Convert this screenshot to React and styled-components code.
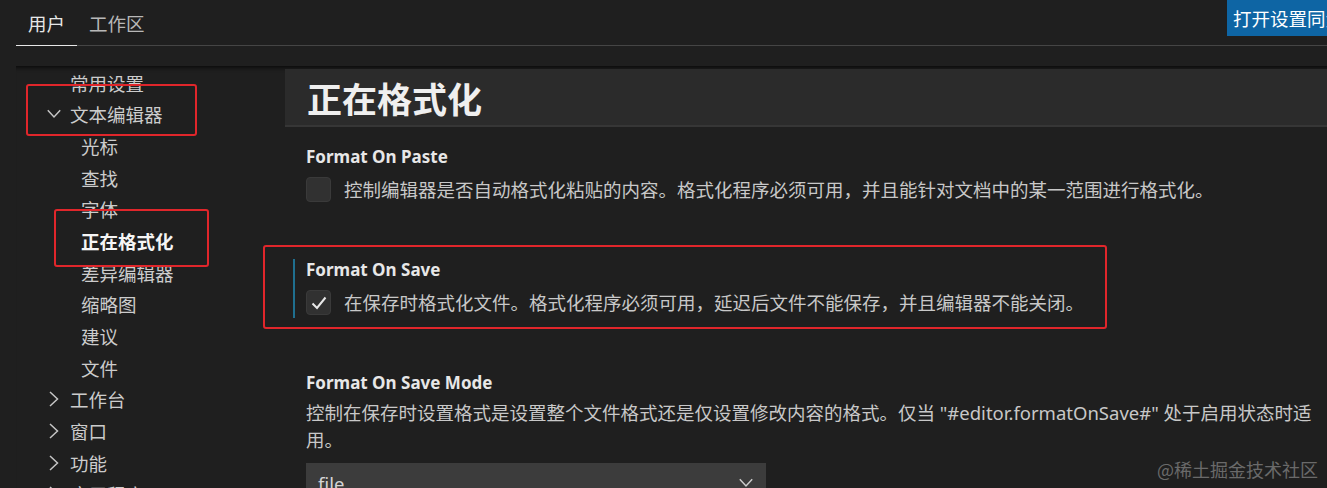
import React from "react";
import styled, { createGlobalStyle } from "styled-components";

const Global = createGlobalStyle`
  html, body { margin: 0; padding: 0; background: #1f1f1f; }
  * { box-sizing: border-box; }
`;

const FONT = `"Noto Sans", "Noto Sans CJK SC", sans-serif`;

const Page = styled.div`
  position: relative;
  width: 1327px;
  height: 488px;
  overflow: hidden;
  background: #1f1f1f;
  font-family: ${FONT};
  color: #cccccc;
  display: flex;
  flex-direction: column;
`;

const Header = styled.header`
  height: 66px;
  flex-shrink: 0;
  padding-left: 16px;
`;

const TabRow = styled.div`
  display: flex;
  align-items: flex-start;
  height: 46px;
  border-bottom: 1px solid #454545;
`;

const Tab = styled.div`
  height: 46px;
  margin-bottom: -1px;
  padding: 0 12px;
  display: flex;
  align-items: center;
  font-size: 18.5px;
  color: ${(p) => (p.$active ? "#e7e7e7" : "#b8b8b8")};
  border-bottom: 1px solid ${(p) => (p.$active ? "#e7e7e7" : "transparent")};
`;

const SyncButton = styled.button`
  margin-left: auto;
  width: 100px;
  height: 36px;
  padding: 0 0 0 6px;
  border: none;
  background: #0e65a4;
  color: #ffffff;
  font-family: ${FONT};
  font-size: 18.5px;
  text-align: left;
  white-space: nowrap;
  overflow: hidden;
`;

const Body = styled.div`
  flex: 1;
  display: flex;
  margin-left: 16px;
  box-shadow: #050505 0 6px 5px -5px inset;
`;

const Sidebar = styled.nav`
  width: 269px;
  flex-shrink: 0;
  padding-top: 1px;
`;

const NavItem = styled.div`
  height: 31.67px;
  display: flex;
  align-items: center;
  padding-left: ${(p) => (p.$level === 2 ? 65 : 31)}px;
  font-size: 18.5px;
  white-space: nowrap;
  color: ${(p) => (p.$selected ? "#f5f5f5" : "#cccccc")};
  font-weight: ${(p) => (p.$selected ? 700 : 400)};
`;

const Twist = styled.span`
  width: 23px;
  height: 100%;
  display: flex;
  align-items: center;
  flex-shrink: 0;
  & > svg { display: block; }
`;

const Main = styled.main`
  flex: 1;
  padding-top: 3px;
  min-width: 0;
`;

const StickyHeader = styled.div`
  height: 58px;
  background: #2b2b2b;
  border-bottom: 2px solid #363636;
  padding-left: 22px;
  display: flex;
  align-items: center;
  font-family: "Noto Sans CJK SC", sans-serif;
  font-size: 35px;
  font-weight: 700;
  color: #efefef;
`;

const Settings = styled.div`
  padding-left: 8px;
`;

const Item = styled.section`
  padding: 19px 0 35px 0;
`;

const ItemInner = styled.div`
  border-left: 2px solid ${(p) => (p.$focused ? "#1f6f8f" : "transparent")};
  padding-left: 11px;
`;

const Title = styled.div`
  height: 22px;
  line-height: 22px;
  font-size: 17px;
  font-weight: 700;
  color: #e7e7e7;
  white-space: nowrap;
`;

const ValueRow = styled.div`
  margin-top: 6px;
  height: 31px;
  display: flex;
  align-items: center;
  gap: 13px;
`;

const Check = styled.div`
  width: 25px;
  height: 25px;
  border-radius: 4px;
  background: #313131;
  border: 1px solid #3a3a3a;
  display: flex;
  align-items: center;
  justify-content: center;
  flex-shrink: 0;
`;

const Desc = styled.div`
  font-size: 18.5px;
  line-height: 27px;
  color: #c8c8c8;
  white-space: ${(p) => (p.$wrap ? "normal" : "nowrap")};
  margin-top: ${(p) => (p.$wrap ? "5px" : "0")};
  max-width: 1008px;
`;

const Select = styled.div`
  margin-top: 10px;
  width: 460px;
  height: 40px;
  background: #3c3c3c;
  display: flex;
  align-items: center;
  justify-content: space-between;
  padding: 0 13px 0 12px;
  font-size: 18.5px;
  color: #d4d4d4;
`;

const Highlight = styled.div`
  position: absolute;
  left: ${(p) => p.$x}px;
  top: ${(p) => p.$y}px;
  width: ${(p) => p.$w}px;
  height: ${(p) => p.$h}px;
  border: 2.5px solid #e0262b;
  border-radius: 3px;
  pointer-events: none;
`;

const Watermark = styled.div`
  position: absolute;
  right: 9px;
  bottom: 6px;
  font-family: "Noto Sans CJK SC", sans-serif;
  font-size: 18px;
  color: #6a6a6a;
  white-space: nowrap;
`;

const ChevronRight = () => (
  <svg width="14" height="16" viewBox="0 0 14 16">
    <polyline points="3,1 10.5,8 3,15" fill="none" stroke="#c5c5c5" strokeWidth="1.5" />
  </svg>
);

const ChevronDown = ({ color = "#c5c5c5" }) => (
  <svg width="14" height="10" viewBox="0 0 14 10">
    <polyline points="0.8,1.2 7,8 13.2,1.2" fill="none" stroke={color} strokeWidth="1.5" />
  </svg>
);

const CheckMark = () => (
  <svg width="18" height="18" viewBox="0 0 18 18">
    <polyline points="2.5,9.5 7,14 15.5,3.5" fill="none" stroke="#e8e8e8" strokeWidth="2" />
  </svg>
);

const nav = [
  { label: "常用设置", level: 1 },
  { label: "文本编辑器", level: 1, open: true },
  { label: "光标", level: 2 },
  { label: "查找", level: 2 },
  { label: "字体", level: 2 },
  { label: "正在格式化", level: 2, selected: true },
  { label: "差异编辑器", level: 2 },
  { label: "缩略图", level: 2 },
  { label: "建议", level: 2 },
  { label: "文件", level: 2 },
  { label: "工作台", level: 1, closed: true },
  { label: "窗口", level: 1, closed: true },
  { label: "功能", level: 1, closed: true },
  { label: "应用程序", level: 1, closed: true },
];

export default function App() {
  return (
    <>
      <Global />
      <Page>
        <Header>
          <TabRow>
            <Tab $active>用户</Tab>
            <Tab>工作区</Tab>
            <SyncButton>打开设置同步</SyncButton>
          </TabRow>
        </Header>
        <Body>
          <Sidebar>
            {nav.map((n) => (
              <NavItem key={n.label} $level={n.level} $selected={n.selected}>
                {n.level === 1 && (
                  <Twist>
                    {n.open ? <ChevronDown /> : n.closed ? <ChevronRight /> : null}
                  </Twist>
                )}
                {n.label}
              </NavItem>
            ))}
          </Sidebar>
          <Main>
            <StickyHeader>正在格式化</StickyHeader>
            <Settings>
              <Item>
                <ItemInner>
                  <Title>Format On Paste</Title>
                  <ValueRow>
                    <Check />
                    <Desc>控制编辑器是否自动格式化粘贴的内容。格式化程序必须可用，并且能针对文档中的某一范围进行格式化。</Desc>
                  </ValueRow>
                </ItemInner>
              </Item>
              <Item>
                <ItemInner $focused>
                  <Title>Format On Save</Title>
                  <ValueRow>
                    <Check>
                      <CheckMark />
                    </Check>
                    <Desc>在保存时格式化文件。格式化程序必须可用，延迟后文件不能保存，并且编辑器不能关闭。</Desc>
                  </ValueRow>
                </ItemInner>
              </Item>
              <Item>
                <ItemInner>
                  <Title>Format On Save Mode</Title>
                  <Desc $wrap>
                    控制在保存时设置格式是设置整个文件格式还是仅设置修改内容的格式。仅当 "#editor.formatOnSave#" 处于启用状态时适用。
                  </Desc>
                  <Select>
                    <span>file</span>
                    <ChevronDown color="#cccccc" />
                  </Select>
                </ItemInner>
              </Item>
            </Settings>
          </Main>
        </Body>
        <Highlight $x={26} $y={84} $w={171} $h={52} />
        <Highlight $x={54} $y={209} $w={155} $h={58} />
        <Highlight $x={263} $y={245} $w={844} $h={84} />
        <Watermark>@稀土掘金技术社区</Watermark>
      </Page>
    </>
  );
}
